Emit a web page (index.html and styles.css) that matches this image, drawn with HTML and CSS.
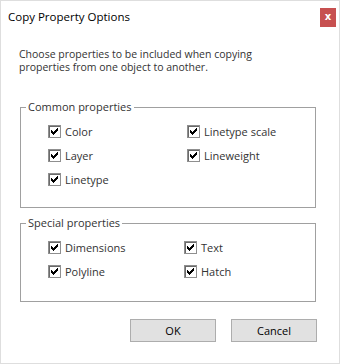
FILE: index.html
```html
<!DOCTYPE html>
<html lang="en">
<head>
    <meta charset="UTF-8">
    <title>Copy Property Options</title>
    <link rel="stylesheet" href="styles.css">
</head>
<body>
    <div class="window">
        <div class="titlebar">
            <div class="title">Copy Property Options</div>
            <div class="close">x</div>
        </div>

        <p class="intro">Choose properties to be included when copying<br>properties from one object to another.</p>

        <fieldset class="group group-common">
            <legend>Common properties</legend>
            <div class="options">
                <label class="check"><svg width="13" height="13" viewBox="0 0 13 13"><rect x="0.5" y="0.5" width="12" height="12" fill="#fff" stroke="#8f8f8f"/><path d="M1 1h11v1H2v10H1z" fill="#6a6a6a"/><path d="M9 3h1v1h-1zM8 4h2v1h-2zM3 5h1v1h-1zM7 5h3v1h-3zM3 6h2v1h-2zM6 6h3v1h-3zM3 7h5v1h-5zM4 8h3v1h-3zM5 9h1v1h-1z" fill="#000"/></svg>Color</label>
                <label class="check"><svg width="13" height="13" viewBox="0 0 13 13"><rect x="0.5" y="0.5" width="12" height="12" fill="#fff" stroke="#8f8f8f"/><path d="M1 1h11v1H2v10H1z" fill="#6a6a6a"/><path d="M9 3h1v1h-1zM8 4h2v1h-2zM3 5h1v1h-1zM7 5h3v1h-3zM3 6h2v1h-2zM6 6h3v1h-3zM3 7h5v1h-5zM4 8h3v1h-3zM5 9h1v1h-1z" fill="#000"/></svg>Linetype scale</label>
                <label class="check"><svg width="13" height="13" viewBox="0 0 13 13"><rect x="0.5" y="0.5" width="12" height="12" fill="#fff" stroke="#8f8f8f"/><path d="M1 1h11v1H2v10H1z" fill="#6a6a6a"/><path d="M9 3h1v1h-1zM8 4h2v1h-2zM3 5h1v1h-1zM7 5h3v1h-3zM3 6h2v1h-2zM6 6h3v1h-3zM3 7h5v1h-5zM4 8h3v1h-3zM5 9h1v1h-1z" fill="#000"/></svg>Layer</label>
                <label class="check"><svg width="13" height="13" viewBox="0 0 13 13"><rect x="0.5" y="0.5" width="12" height="12" fill="#fff" stroke="#8f8f8f"/><path d="M1 1h11v1H2v10H1z" fill="#6a6a6a"/><path d="M9 3h1v1h-1zM8 4h2v1h-2zM3 5h1v1h-1zM7 5h3v1h-3zM3 6h2v1h-2zM6 6h3v1h-3zM3 7h5v1h-5zM4 8h3v1h-3zM5 9h1v1h-1z" fill="#000"/></svg>Lineweight</label>
                <label class="check"><svg width="13" height="13" viewBox="0 0 13 13"><rect x="0.5" y="0.5" width="12" height="12" fill="#fff" stroke="#8f8f8f"/><path d="M1 1h11v1H2v10H1z" fill="#6a6a6a"/><path d="M9 3h1v1h-1zM8 4h2v1h-2zM3 5h1v1h-1zM7 5h3v1h-3zM3 6h2v1h-2zM6 6h3v1h-3zM3 7h5v1h-5zM4 8h3v1h-3zM5 9h1v1h-1z" fill="#000"/></svg>Linetype</label>
            </div>
        </fieldset>

        <fieldset class="group group-special">
            <legend>Special properties</legend>
            <div class="options">
                <label class="check"><svg width="13" height="13" viewBox="0 0 13 13"><rect x="0.5" y="0.5" width="12" height="12" fill="#fff" stroke="#8f8f8f"/><path d="M1 1h11v1H2v10H1z" fill="#6a6a6a"/><path d="M9 3h1v1h-1zM8 4h2v1h-2zM3 5h1v1h-1zM7 5h3v1h-3zM3 6h2v1h-2zM6 6h3v1h-3zM3 7h5v1h-5zM4 8h3v1h-3zM5 9h1v1h-1z" fill="#000"/></svg>Dimensions</label>
                <label class="check"><svg width="13" height="13" viewBox="0 0 13 13"><rect x="0.5" y="0.5" width="12" height="12" fill="#fff" stroke="#8f8f8f"/><path d="M1 1h11v1H2v10H1z" fill="#6a6a6a"/><path d="M9 3h1v1h-1zM8 4h2v1h-2zM3 5h1v1h-1zM7 5h3v1h-3zM3 6h2v1h-2zM6 6h3v1h-3zM3 7h5v1h-5zM4 8h3v1h-3zM5 9h1v1h-1z" fill="#000"/></svg>Text</label>
                <label class="check"><svg width="13" height="13" viewBox="0 0 13 13"><rect x="0.5" y="0.5" width="12" height="12" fill="#fff" stroke="#8f8f8f"/><path d="M1 1h11v1H2v10H1z" fill="#6a6a6a"/><path d="M9 3h1v1h-1zM8 4h2v1h-2zM3 5h1v1h-1zM7 5h3v1h-3zM3 6h2v1h-2zM6 6h3v1h-3zM3 7h5v1h-5zM4 8h3v1h-3zM5 9h1v1h-1z" fill="#000"/></svg>Polyline</label>
                <label class="check"><svg width="13" height="13" viewBox="0 0 13 13"><rect x="0.5" y="0.5" width="12" height="12" fill="#fff" stroke="#8f8f8f"/><path d="M1 1h11v1H2v10H1z" fill="#6a6a6a"/><path d="M9 3h1v1h-1zM8 4h2v1h-2zM3 5h1v1h-1zM7 5h3v1h-3zM3 6h2v1h-2zM6 6h3v1h-3zM3 7h5v1h-5zM4 8h3v1h-3zM5 9h1v1h-1z" fill="#000"/></svg>Hatch</label>
            </div>
        </fieldset>

        <div class="buttons">
            <button class="button">OK</button>
            <button class="button">Cancel</button>
        </div>
    </div>
</body>
</html>
```

FILE: styles.css
```css
body {
    margin: 0;
    font-family: 'Open Sans', 'Noto Sans', sans-serif;
    font-size: 11px;
    color: #222;
}
.window {
    width: 340px;
    height: 364px;
    box-sizing: border-box;
    border: 1px solid #dedede;
    background: #fff;
}
.titlebar {
    display: flex;
    justify-content: space-between;
    align-items: flex-start;
    height: 34px;
}
.title {
    margin: 8px 0 0 7px;
    font-size: 11.5px;
    line-height: 16px;
    color: #000;
}
.close {
    width: 16px;
    height: 19px;
    margin: 7px 3px 0 0;
    background: #c75050;
    color: #fff;
    font-family: 'DejaVu Sans', sans-serif;
    font-weight: bold;
    font-size: 10px;
    line-height: 18px;
    text-align: center;
}
.intro {
    margin: 13px 0 0 18px;
    font-size: 10.5px;
    line-height: 13px;
    color: #333;
}
.group {
    width: 296px;
    box-sizing: border-box;
    margin: 0 0 0 19px;
    padding: 0 0 0 5px;
    border: 1px solid #a0a0a0;
}
.group legend {
    padding: 0 2px;
    line-height: 16px;
    color: #333;
}
.group-common {
    height: 109px;
    margin-top: 25px;
}
.group-special {
    height: 87px;
    margin-top: 7px;
}
.options {
    display: grid;
    grid-template-columns: 139px auto;
    row-gap: 8px;
    padding: 8px 0 0 22px;
}
.group-special .options {
    grid-template-columns: 136px auto;
}
.check {
    display: flex;
    align-items: center;
    gap: 4px;
    height: 16px;
    color: #333;
}
.check svg {
    flex: none;
}
.buttons {
    display: flex;
    justify-content: flex-end;
    gap: 15px;
    margin: 17px 22px 0 0;
}
.button {
    width: 86px;
    height: 23px;
    box-sizing: border-box;
    background: #e1e1e1;
    border: 1px solid #adadad;
    font-family: 'Open Sans', 'Noto Sans', sans-serif;
    font-size: 11px;
    color: #000;
    padding: 0;
}
```
